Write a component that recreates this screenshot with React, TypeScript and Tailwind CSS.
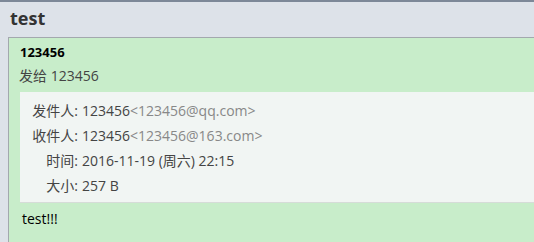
export default function App() {
  const rows = [
    { label: '发件人:', value: '123456', extra: '<123456@qq.com>' },
    { label: '收件人:', value: '123456', extra: '<123456@163.com>' },
    { label: '时间:', value: '2016-11-19 (周六) 22:15' },
    { label: '大小:', value: '257 B' },
  ];

  return (
    <div
      className="h-[242px] w-full overflow-hidden border-t-2 border-[#7d8898] bg-[#dde2e9]"
      style={{ fontFamily: '"Open Sans", "Noto Sans CJK SC", sans-serif' }}
    >
      <h1 className="h-[35px] pl-[10px] pt-[4px] text-[18px] font-bold leading-[24px] text-[#333]">test</h1>
      <div className="ml-[8px] h-[210px] border-l border-t border-[#a3a8ae] bg-[#c8edca] pt-[5px]">
        <div className="pl-[11px] text-[13px] font-bold leading-[18px] text-black">123456</div>
        <div className="pl-[10px] pt-[5px] text-[14px] leading-[20px] text-[#444]">发给 123456</div>
        <div className="ml-[11px] mt-[6px] border-b border-[#d6dcd8] bg-[#f1f5f3] pb-[4px] pl-[11px] pt-[6px]">
          {rows.map((r) => (
            <div key={r.label} className="flex h-[25px] items-center whitespace-nowrap text-[14px] text-[#444]">
              <span className="w-[47px] shrink-0 text-right">{r.label}</span>
              <span className="pl-[4px]">{r.value}</span>
              {r.extra && <span className="text-[#888]">{r.extra}</span>}
            </div>
          ))}
        </div>
        <div className="pl-[13px] pt-[6px] text-[14px] leading-[20px] text-black">test!!!</div>
      </div>
    </div>
  );
}
